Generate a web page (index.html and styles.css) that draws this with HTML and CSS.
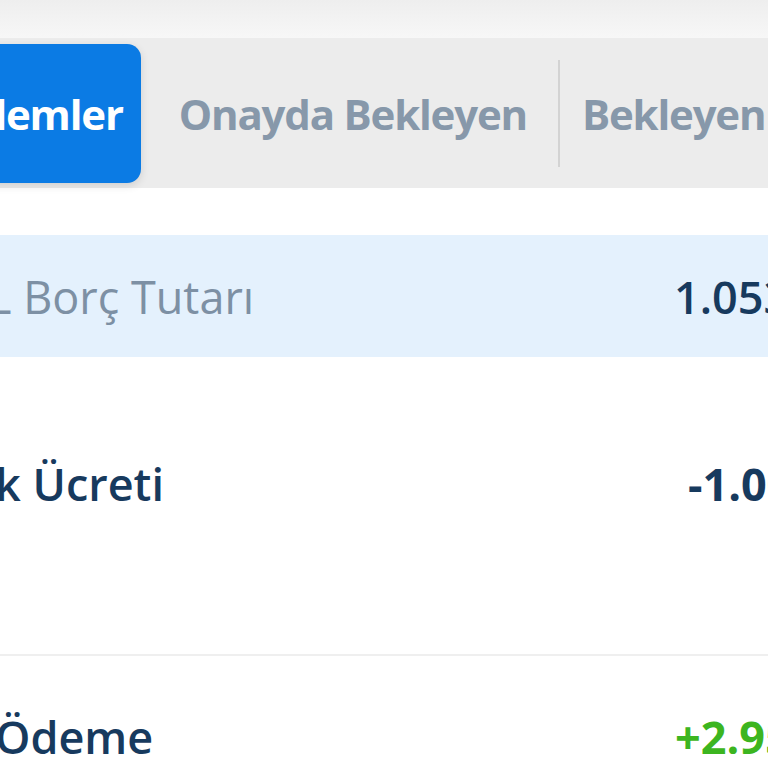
FILE: index.html
```html
<!DOCTYPE html>
<html lang="tr">
<head>
    <meta charset="UTF-8">
    <title>Kart Detayı</title>
    <link rel="stylesheet" href="styles.css">
</head>
<body>
    <div class="top-strip"></div>

    <nav class="tabs">
        <div class="tab active">İşlemler</div>
        <div class="tab">Onayda Bekleyen</div>
        <div class="tab-sep"></div>
        <div class="tab">Bekleyen İşlemler</div>
    </nav>

    <div class="list">
        <div class="row highlight">
            <span class="label muted">L Borç Tutarı</span>
            <span class="amount">1.053,40 TL</span>
        </div>
        <div class="row tall">
            <span class="label">k Ücreti</span>
            <span class="amount strong neg">-1.000,00 TL</span>
        </div>
        <div class="row last">
            <span class="label">Ödeme</span>
            <span class="amount strong pos">+2.950,00 TL</span>
        </div>
    </div>
</body>
</html>
```

FILE: styles.css
```css
html, body { margin: 0; padding: 0; }
body { width: 768px; height: 768px; overflow: hidden; background: #fff; font-family: "Open Sans", "Noto Sans", sans-serif; color: #173a5e; }

.top-strip { height: 38px; background: linear-gradient(#eeeeee, #f7f7f7); }

.tabs { display: flex; align-items: center; height: 150px; background: #ececec; white-space: nowrap; }
.tab { font-size: 42px; font-weight: 700; letter-spacing: -1.2px; color: #8798aa; padding: 0 31px 0 38px; line-height: 139px; }
.tab.active { margin-left: -76px; padding: 0 18px 0 38px; background: #0b7be4; color: #fff; border-radius: 0 14px 14px 0; box-shadow: 0 3px 8px rgba(0, 0, 0, 0.12); }
.tab-sep { flex: 0 0 2px; height: 107px; background: #d3d3d3; margin-right: -16px; }

.list { margin-top: 47px; }
.row { display: flex; white-space: nowrap; }
.row.highlight { height: 122px; align-items: center; background: #e4f1fd; }
.row.tall { height: 299px; padding-top: 96px; box-sizing: border-box; border-bottom: 2px solid #efefef; }
.row.last { padding-top: 50px; }

.label { flex: 0 0 679px; margin-left: -5px; font-size: 45px; font-weight: 600; }
.label.muted { flex-basis: 686px; margin-left: -12px; font-weight: 400; color: #7d90a4; }
.amount { font-size: 45px; font-weight: 600; }
.amount.strong { font-weight: 700; }
.amount.neg { margin-left: 14px; }
.amount.pos { margin-left: 1px; color: #3cb520; }
```
